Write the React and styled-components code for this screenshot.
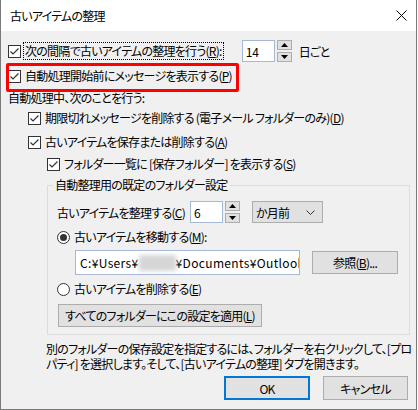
import React from "react";
import styled, { createGlobalStyle } from "styled-components";

const Global = createGlobalStyle`
  html, body { margin: 0; padding: 0; background: #ffffff; }
  body { font-family: "Noto Sans CJK JP", "Noto Sans", sans-serif; font-size: 12px; color: #000; }
  * { box-sizing: border-box; }
`;

const Dialog = styled.div`
  width: 417px;
  height: 410px;
  border: 1px solid #7a7a7a;
  border-top: none;
  display: flex;
  flex-direction: column;
  background: #f0f0f0;
  font-feature-settings: "palt";
  letter-spacing: -0.75px;
  overflow: hidden;
`;

const TitleBar = styled.div`
  flex: none;
  height: 31px;
  background: #ffffff;
  display: flex;
  align-items: center;
  justify-content: space-between;
  padding: 0 9px 0 9px;
  font-size: 12px;
`;

const Body = styled.div`
  flex: 1;
  display: flex;
  flex-direction: column;
  padding: 0 7px 0 7px;
`;

const Row = styled.div`
  flex: none;
  display: flex;
  align-items: center;
  height: ${(p) => p.$h || 20}px;
  margin-top: ${(p) => p.$mt || 0}px;
  padding-left: ${(p) => p.$pl || 0}px;
  white-space: nowrap;
`;

const Highlight = styled(Row)`
  position: relative;
  &::after {
    content: "";
    position: absolute;
    left: -2px;
    top: -3px;
    width: 227px;
    height: 23px;
    border: 3px solid #ff0000;
    border-radius: 2px;
    pointer-events: none;
  }
`;

const Box = styled.span`
  width: 13px;
  height: 13px;
  flex: none;
  background: #fff;
  border: 1px solid #333;
  display: inline-flex;
  align-items: center;
  justify-content: center;
`;

const Circle = styled.span`
  width: 13px;
  height: 13px;
  flex: none;
  border-radius: 50%;
  background: #fff;
  border: 1px solid #333;
  display: inline-flex;
  align-items: center;
  justify-content: center;
  &::after {
    content: "";
    width: 7px;
    height: 7px;
    border-radius: 50%;
    background: ${(p) => (p.$on ? "#333" : "transparent")};
  }
`;

const Label = styled.span`
  margin-left: ${(p) => p.$ml ?? 4}px;
  padding: 0 1px;
  line-height: 16px;
  border: 1px ${(p) => (p.$focus ? "dotted #000" : "solid transparent")};
`;

const Text = styled.span`
  margin-left: ${(p) => p.$ml || 0}px;
`;

const NumInput = styled.div`
  width: 33px;
  height: 22px;
  flex: none;
  margin-left: ${(p) => p.$ml || 0}px;
  background: #fff;
  border: 1px solid #a6b9d4;
  display: flex;
  align-items: center;
  padding-left: 3px;
  letter-spacing: 0;
`;

const Spin = styled.div`
  display: flex;
  flex-direction: column;
  justify-content: space-between;
  height: 22px;
  margin-left: 2px;
`;

const SpinBtn = styled.div`
  width: 15px;
  height: 10px;
  background: #e1e1e1;
  border: 1px solid #adadad;
  display: flex;
  align-items: center;
  justify-content: center;
`;

const Select = styled.div`
  width: 71px;
  height: 22px;
  flex: none;
  margin-left: ${(p) => p.$ml || 0}px;
  background: #e1e1e1;
  border: 1px solid #adadad;
  display: flex;
  align-items: center;
  justify-content: space-between;
  padding: 0 7px 0 3px;
`;

const Group = styled.fieldset`
  flex: none;
  margin: 3px 0 0 39px;
  width: 363px;
  padding: 0 0 7px 9px;
  border: 1px solid #dcdcdc;
  min-width: 0;
`;

const Legend = styled.legend`
  padding: 0 2px;
  margin-left: -4px;
  line-height: 16px;
`;

const PathBox = styled.div`
  width: 225px;
  height: 25px;
  flex: none;
  margin-left: 18px;
  background: #fff;
  border: 1px solid #a6b9d4;
  display: flex;
  align-items: center;
  padding-left: 4px;
  overflow: hidden;
  white-space: nowrap;
  letter-spacing: 0.35px;
`;

const Blur = styled.span`
  display: inline-block;
  width: 37px;
  height: 16px;
  background: #d6d6d6;
  filter: blur(2px);
  flex: none;
`;

const Button = styled.div`
  width: ${(p) => p.$w}px;
  height: ${(p) => p.$h || 23}px;
  margin-left: ${(p) => p.$ml || 0}px;
  background: #e1e1e1;
  border: ${(p) => (p.$default ? "2px solid #0078d7" : "1px solid #adadad")};
  display: flex;
  align-items: center;
  justify-content: center;
  flex: none;
`;

const Note = styled.div`
  flex: none;
  margin: 6px 0 0 38px;
  line-height: 15px;
  white-space: nowrap;
`;

const Buttons = styled.div`
  flex: none;
  display: flex;
  justify-content: flex-end;
  margin-top: 5px;
  padding-right: 1px;
  gap: 13px;
`;

const Check = () => (
  <Box>
    <svg width="11" height="11" viewBox="0 0 11 11">
      <polyline points="1.5,5.5 4,8 9.5,2.5" fill="none" stroke="#333" strokeWidth="1.2" />
    </svg>
  </Box>
);

const Up = () => (
  <svg width="7" height="4" viewBox="0 0 7 4"><polygon points="0,4 7,4 3.5,0" fill="#000" /></svg>
);
const Down = () => (
  <svg width="7" height="4" viewBox="0 0 7 4"><polygon points="0,0 7,0 3.5,4" fill="#000" /></svg>
);

const Spinner = () => (
  <Spin>
    <SpinBtn><Up /></SpinBtn>
    <SpinBtn><Down /></SpinBtn>
  </Spin>
);

export default function App() {
  return (
    <>
      <Global />
      <Dialog>
        <TitleBar>
          <span>古いアイテムの整理</span>
          <svg width="11" height="11" viewBox="0 0 11 11">
            <path d="M0.5 0.5 L10.5 10.5 M10.5 0.5 L0.5 10.5" stroke="#000" strokeWidth="1" />
          </svg>
        </TitleBar>
        <Body>
          <Row $h={22} $mt={9}>
            <Check />
            <Label $ml={2} $focus>次の間隔で古いアイテムの整理を行う(<u>R</u>):</Label>
            <NumInput $ml={18}>14</NumInput>
            <Spinner />
            <Text $ml={7}>日ごと</Text>
          </Row>
          <Highlight $mt={4}>
            <Check />
            <Label $ml={2}>自動処理開始前にメッセージを表示する(<u>P</u>)</Label>
          </Highlight>
          <Row $mt={1}>自動処理中、次のことを行う:</Row>
          <Row $mt={1} $pl={20}>
            <Check />
            <Label $ml={2}>期限切れメッセージを削除する (電子メール フォルダーのみ)(<u>D</u>)</Label>
          </Row>
          <Row $mt={4} $pl={20}>
            <Check />
            <Label $ml={2}>古いアイテムを保存または削除する(<u>A</u>)</Label>
          </Row>
          <Row $mt={2} $pl={39}>
            <Check />
            <Label $ml={2}>フォルダー一覧に [保存フォルダー] を表示する(<u>S</u>)</Label>
          </Row>
          <Group>
            <Legend>自動整理用の既定のフォルダー設定</Legend>
            <Row $h={22} $mt={8}>
              <Text>古いアイテムを整理する(<u>C</u>)</Text>
              <NumInput $ml={5}>6</NumInput>
              <Spinner />
              <Select $ml={12}>
                <span>か月前</span>
                <svg width="9" height="5" viewBox="0 0 9 5">
                  <polyline points="0.5,0.5 4.5,4.5 8.5,0.5" fill="none" stroke="#333" strokeWidth="1" />
                </svg>
              </Select>
            </Row>
            <Row $mt={4}>
              <Circle $on />
              <Label $ml={2}>古いアイテムを移動する(<u>M</u>):</Label>
            </Row>
            <Row $h={25} $mt={3}>
              <PathBox>
                C:¥Users¥<Blur />¥Documents¥Outlook
              </PathBox>
              <Button $w={86} $ml={12}>参照(<u>B</u>)...</Button>
            </Row>
            <Row $mt={4}>
              <Circle />
              <Label $ml={2}>古いアイテムを削除する(<u>E</u>)</Label>
            </Row>
            <Row $h={23} $mt={5}>
              <Button $w={204} $ml={1}>すべてのフォルダーにこの設定を適用(<u>L</u>)</Button>
            </Row>
          </Group>
          <Note>
            別のフォルダーの保存設定を指定するには、フォルダーを右クリックして、[プロ<br />
            パティ] を選択します。そして、[古いアイテムの整理] タブを開きます。
          </Note>
          <Buttons>
            <Button $w={86} $h={24} $default>OK</Button>
            <Button $w={85} $h={24}>キャンセル</Button>
          </Buttons>
        </Body>
      </Dialog>
    </>
  );
}
